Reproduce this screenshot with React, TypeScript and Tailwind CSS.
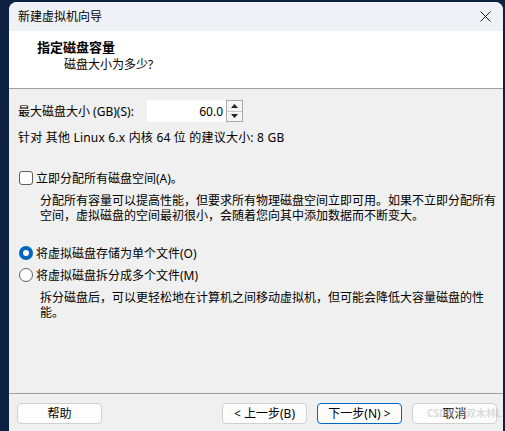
const font = { fontFamily: '"Noto Sans", "Noto Sans CJK SC", sans-serif' };

function Checkbox() {
  return <span className="w-[14px] h-[14px] rounded-[3px] border border-[#5f5f5f] bg-white shrink-0" />;
}

function Radio({ checked }: { checked?: boolean }) {
  if (checked) {
    return (
      <span className="w-[14px] h-[14px] rounded-full bg-[#0067c0] flex items-center justify-center shrink-0">
        <span className="w-[6px] h-[6px] rounded-full bg-white" />
      </span>
    );
  }
  return <span className="w-[14px] h-[14px] rounded-full border border-[#5f5f5f] bg-white shrink-0" />;
}

function Button({ label, primary, className = "" }: { label: string; primary?: boolean; className?: string }) {
  return (
    <button
      className={
        "w-[85px] h-[21px] rounded-[4px] bg-[#fdfdfd] text-[12px] leading-none text-black flex items-center justify-center whitespace-nowrap " +
        (primary ? "border border-[#0067c0] " : "border border-[#d0d0d0] ") +
        className
      }
    >
      {label}
    </button>
  );
}

export default function App() {
  return (
    <div className="w-[505px] h-[431px] bg-[#0c2142] overflow-hidden pl-[9px] pt-[2px]" style={font}>
      <div className="w-[494px] h-[429px] rounded-t-[8px] bg-[#f0f0f0] flex flex-col overflow-hidden text-black text-[12px]">
        {/* Title bar */}
        <div className="h-[29px] shrink-0 bg-[#eef2f7] flex items-center justify-between pl-[9px] pr-[12px]">
          <span className="leading-none">新建虚拟机向导</span>
          <svg width="11" height="11" viewBox="0 0 11 11" className="text-[#1a1a1a]">
            <path d="M0.5 0.5 L10.5 10.5 M10.5 0.5 L0.5 10.5" stroke="currentColor" strokeWidth="1" />
          </svg>
        </div>

        {/* Header */}
        <div className="h-[58px] shrink-0 bg-white border-b border-[#a0a0a0] pt-[7px]">
          <div className="pl-[28px] text-[13px] leading-[18px] font-bold">指定磁盘容量</div>
          <div className="pl-[55px] leading-[17px]">磁盘大小为多少?</div>
        </div>

        {/* Body */}
        <div className="flex-1 flex flex-col leading-[15px] whitespace-nowrap">
          <div className="mt-[11px] h-[22px] flex items-center pl-[9px]">
            <span className="w-[129px]">最大磁盘大小 (GB)(S):</span>
            <div className="w-[79px] h-[22px] bg-white flex items-center justify-end pr-[3px] text-[#000]">60.0</div>
            <div className="w-[17px] h-[22px] border border-[#a8a8a8] bg-[#f5f5f5] flex flex-col">
              <div className="flex-1 flex items-center justify-center border-b border-[#c8c8c8]">
                <svg width="7" height="4" viewBox="0 0 7 4"><path d="M3.5 0 L7 4 L0 4 Z" fill="#222" /></svg>
              </div>
              <div className="flex-1 flex items-center justify-center">
                <svg width="7" height="4" viewBox="0 0 7 4"><path d="M0 0 L7 0 L3.5 4 Z" fill="#222" /></svg>
              </div>
            </div>
          </div>
          <div className="mt-[8px] pl-[9px] tracking-[0.2px]">针对 其他 Linux 6.x 内核 64 位 的建议大小: 8 GB</div>

          <div className="mt-[25px] h-[16px] flex items-center gap-[3px] pl-[10px]">
            <Checkbox />
            <span>立即分配所有磁盘空间(A)。</span>
          </div>
          <div className="mt-[7px] pl-[31px]">
            分配所有容量可以提高性能，但要求所有物理磁盘空间立即可用。如果不立即分配所有
            <br />
            空间，虚拟磁盘的空间最初很小，会随着您向其中添加数据而不断变大。
          </div>

          <div className="mt-[22px] h-[16px] flex items-center gap-[3px] pl-[10px]">
            <Radio checked />
            <span>将虚拟磁盘存储为单个文件(O)</span>
          </div>
          <div className="mt-[6px] h-[16px] flex items-center gap-[3px] pl-[10px]">
            <Radio />
            <span>将虚拟磁盘拆分成多个文件(M)</span>
          </div>
          <div className="mt-[7px] pl-[31px]">
            拆分磁盘后，可以更轻松地在计算机之间移动虚拟机，但可能会降低大容量磁盘的性
            <br />
            能。
          </div>
        </div>

        {/* Footer */}
        <div className="h-[38px] shrink-0 border-t border-[#a0a0a0] relative">
          <div className="flex items-start pt-[9px] pl-[8px] pr-[6px]">
            <Button label="帮助" />
            <div className="flex-1" />
            <div className="flex gap-[10px]">
              <Button label="< 上一步(B)" />
              <Button label="下一步(N) >" primary />
              <Button label="取消" />
            </div>
          </div>
          <span className="absolute left-[418px] top-[14px] text-[10px] font-bold text-[#c4c4c4]/60 leading-none whitespace-nowrap pointer-events-none">
            CSDN @双木林L
          </span>
        </div>
      </div>
    </div>
  );
}
